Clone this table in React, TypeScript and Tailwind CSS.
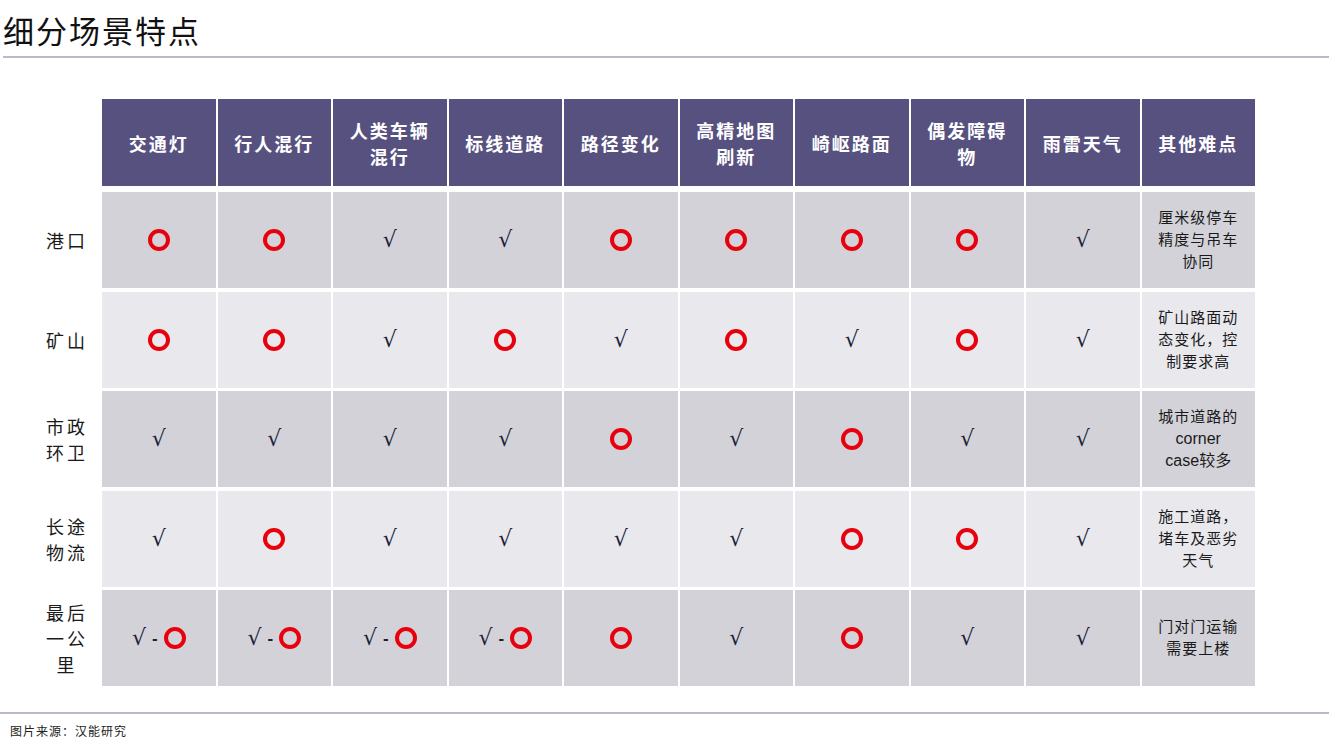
type Mark = "o" | "v" | "vo";

interface SceneRow {
  label: string[];
  marks: Mark[];
  note: string[];
  tone: "dark" | "light";
}

const headers: string[][] = [
  ["交通灯"],
  ["行人混行"],
  ["人类车辆", "混行"],
  ["标线道路"],
  ["路径变化"],
  ["高精地图", "刷新"],
  ["崎岖路面"],
  ["偶发障碍", "物"],
  ["雨雷天气"],
  ["其他难点"],
];

const rows: SceneRow[] = [
  {
    label: ["港口"],
    marks: ["o", "o", "v", "v", "o", "o", "o", "o", "v"],
    note: ["厘米级停车", "精度与吊车", "协同"],
    tone: "dark",
  },
  {
    label: ["矿山"],
    marks: ["o", "o", "v", "o", "v", "o", "v", "o", "v"],
    note: ["矿山路面动", "态变化，控", "制要求高"],
    tone: "light",
  },
  {
    label: ["市政", "环卫"],
    marks: ["v", "v", "v", "v", "o", "v", "o", "v", "v"],
    note: ["城市道路的", "corner", "case较多"],
    tone: "dark",
  },
  {
    label: ["长途", "物流"],
    marks: ["v", "o", "v", "v", "v", "v", "o", "o", "v"],
    note: ["施工道路，", "堵车及恶劣", "天气"],
    tone: "light",
  },
  {
    label: ["最后", "一公", "里"],
    marks: ["vo", "vo", "vo", "vo", "o", "v", "o", "v", "v"],
    note: ["门对门运输", "需要上楼"],
    tone: "dark",
  },
];

const cjk = "font-['Noto_Sans_CJK_SC',sans-serif]";

function Ring() {
  return <span className="inline-block w-[22px] h-[22px] rounded-full border-4 border-[#e8000d]" />;
}

function Check() {
  return (
    <span className="font-['DejaVu_Serif',serif] text-[22px] leading-none text-[#1c1f3a]">√</span>
  );
}

function MarkCell({ mark }: { mark: Mark }) {
  if (mark === "o") return <Ring />;
  if (mark === "v") return <Check />;
  return (
    <span className="flex items-center gap-[6px]">
      <Check />
      <span className="font-['Liberation_Sans',sans-serif] text-[17px] font-bold leading-none text-[#222]">-</span>
      <Ring />
    </span>
  );
}

export default function App() {
  return (
    <div className={`w-[1329px] h-[750px] bg-white relative overflow-hidden ${cjk}`}>
      <div className="px-[3px] pt-[10px]">
        <h1 className="text-[31px] leading-[40px] text-[#111] tracking-[2px]">细分场景特点</h1>
      </div>
      <div className="ml-[3px] mt-[6px] h-[2px] bg-[#bcbac6]" />

      <div className="flex mt-[41px]">
        {/* row label column */}
        <div className="w-[102px] flex flex-col">
          <div className="h-[87px] mb-[6px]" />
          <div className="flex flex-col gap-[3.5px]">
            {rows.map((r) => (
              <div key={r.label.join("")} className="h-[96px] pl-[32px] flex flex-col items-center justify-center">
                {r.label.map((l) => (
                  <div key={l} className="text-[18px] leading-[26px] text-[#1a1a1a] tracking-[3px]">
                    {l}
                  </div>
                ))}
              </div>
            ))}
          </div>
        </div>

        {/* table */}
        <div className="w-[1153px] flex flex-col">
          <div className="grid grid-cols-10 gap-x-[2px] h-[87px] mb-[6px]">
            {headers.map((h) => (
              <div key={h.join("")} className="bg-[#57517f] flex flex-col items-center justify-center">
                {h.map((t) => (
                  <div key={t} className="text-white text-[18px] font-bold leading-[26px] tracking-[2px]">
                    {t}
                  </div>
                ))}
              </div>
            ))}
          </div>

          <div className="flex flex-col gap-[3.5px]">
            {rows.map((r) => (
              <div key={r.label.join("")} className="grid grid-cols-10 gap-x-[2px] h-[96px]">
                {r.marks.map((m, i) => (
                  <div
                    key={i}
                    className={`flex items-center justify-center ${r.tone === "dark" ? "bg-[#d3d2d9]" : "bg-[#e8e8ed]"}`}
                  >
                    <MarkCell mark={m} />
                  </div>
                ))}
                <div
                  className={`flex flex-col items-center justify-center ${r.tone === "dark" ? "bg-[#d3d2d9]" : "bg-[#e8e8ed]"}`}
                >
                  {r.note.map((n) => (
                    <div key={n} className="text-[15px] leading-[22px] text-[#1a1a1a] tracking-[1px] font-['Liberation_Sans','Noto_Sans_CJK_SC',sans-serif]">
                      {/[a-z]/.test(n) ? <span className="text-[16px] tracking-normal">{n}</span> : n}
                    </div>
                  ))}
                </div>
              </div>
            ))}
          </div>
        </div>
      </div>

      <div className="absolute left-0 right-0 top-[712px] h-[2px] bg-[#bcbac6]" />
      <div className="absolute left-[10px] top-[723px] text-[12px] leading-[16px] text-[#222] tracking-[1px]">
        图片来源：汉能研究
      </div>
    </div>
  );
}
